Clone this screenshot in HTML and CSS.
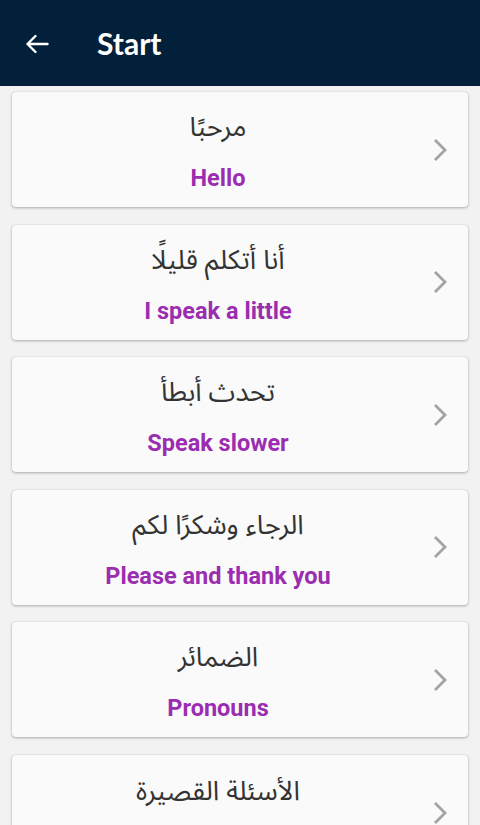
FILE: index.html
```html
<!DOCTYPE html>
<html lang="en">
<head>
<meta charset="utf-8">
<link rel="stylesheet" href="styles.css">
</head>
<body>
<header class="appbar">
  <svg class="back" width="24" height="20" viewBox="0 0 24 20"><path d="M22.5 10H2.5M10.5 2L2.5 10L10.5 18" fill="none" stroke="#fff" stroke-width="2.4" stroke-linecap="round" stroke-linejoin="round"/></svg>
  <h1 class="title">Start</h1>
</header>
<main class="list">
  <div class="card"><div class="texts"><div class="ar" dir="rtl">مرحبًا</div><div class="en">Hello</div></div><div class="chev"><svg width="14" height="24" viewBox="0 0 14 24"><path d="M2 2L12 12L2 22" fill="none" stroke="#a3a3a3" stroke-width="2.8"/></svg></div></div>
  <div class="card"><div class="texts"><div class="ar" dir="rtl">أنا أتكلم قليلًا</div><div class="en">I speak a little</div></div><div class="chev"><svg width="14" height="24" viewBox="0 0 14 24"><path d="M2 2L12 12L2 22" fill="none" stroke="#a3a3a3" stroke-width="2.8"/></svg></div></div>
  <div class="card"><div class="texts"><div class="ar" dir="rtl">تحدث أبطأ</div><div class="en">Speak slower</div></div><div class="chev"><svg width="14" height="24" viewBox="0 0 14 24"><path d="M2 2L12 12L2 22" fill="none" stroke="#a3a3a3" stroke-width="2.8"/></svg></div></div>
  <div class="card"><div class="texts"><div class="ar" dir="rtl">الرجاء وشكرًا لكم</div><div class="en">Please and thank you</div></div><div class="chev"><svg width="14" height="24" viewBox="0 0 14 24"><path d="M2 2L12 12L2 22" fill="none" stroke="#a3a3a3" stroke-width="2.8"/></svg></div></div>
  <div class="card"><div class="texts"><div class="ar" dir="rtl">الضمائر</div><div class="en">Pronouns</div></div><div class="chev"><svg width="14" height="24" viewBox="0 0 14 24"><path d="M2 2L12 12L2 22" fill="none" stroke="#a3a3a3" stroke-width="2.8"/></svg></div></div>
  <div class="card"><div class="texts"><div class="ar" dir="rtl">الأسئلة القصيرة</div></div><div class="chev"><svg width="14" height="24" viewBox="0 0 14 24"><path d="M2 2L12 12L2 22" fill="none" stroke="#a3a3a3" stroke-width="2.8"/></svg></div></div>
</main>
</body>
</html>
```

FILE: styles.css
```css
html, body {
  margin: 0;
  padding: 0;
  height: 825px;
  overflow: hidden;
  background: #f2f2f2;
  font-family: Roboto, "Noto Sans", sans-serif;
}
.appbar {
  height: 86px;
  background: #03203a;
  display: flex;
  align-items: center;
  padding-left: 25px;
  box-sizing: border-box;
}
.back {
  display: block;
  margin-top: 1px;
}
.title {
  margin: 0 0 0 48px;
  color: #fff;
  font-family: Lato, "Open Sans", sans-serif;
  font-weight: 700;
  font-size: 30px;
  line-height: 1;
}
.list {
  display: flex;
  flex-direction: column;
  gap: 17.5px;
  padding: 6px 12px 0;
}
.card {
  flex: none;
  height: 115px;
  box-sizing: border-box;
  background: #fafafa;
  border-radius: 4px;
  box-shadow: 0 1px 3px rgba(0,0,0,0.28), 0 0 1px rgba(0,0,0,0.2);
  display: flex;
  align-items: center;
}
.card:last-child {
  align-items: flex-start;
  padding-top: 16px;
}
.card:last-child .chev {
  padding-top: 30px;
}
.texts {
  flex: 1;
  display: flex;
  flex-direction: column;
  align-items: center;
  padding-top: 3px;
}
.ar {
  font-family: "Noto Sans Arabic", "DejaVu Sans", sans-serif;
  font-size: 27px;
  line-height: 36px;
  color: #333;
}
.en {
  margin-top: 18px;
  font-size: 23.5px;
  line-height: 28px;
  font-weight: 700;
  color: #9a2db0;
}
.chev {
  width: 44px;
  flex: none;
  display: flex;
  justify-content: flex-start;
  padding-left: 9px;
  box-sizing: border-box;
}
.chev svg { display: block; }
```
